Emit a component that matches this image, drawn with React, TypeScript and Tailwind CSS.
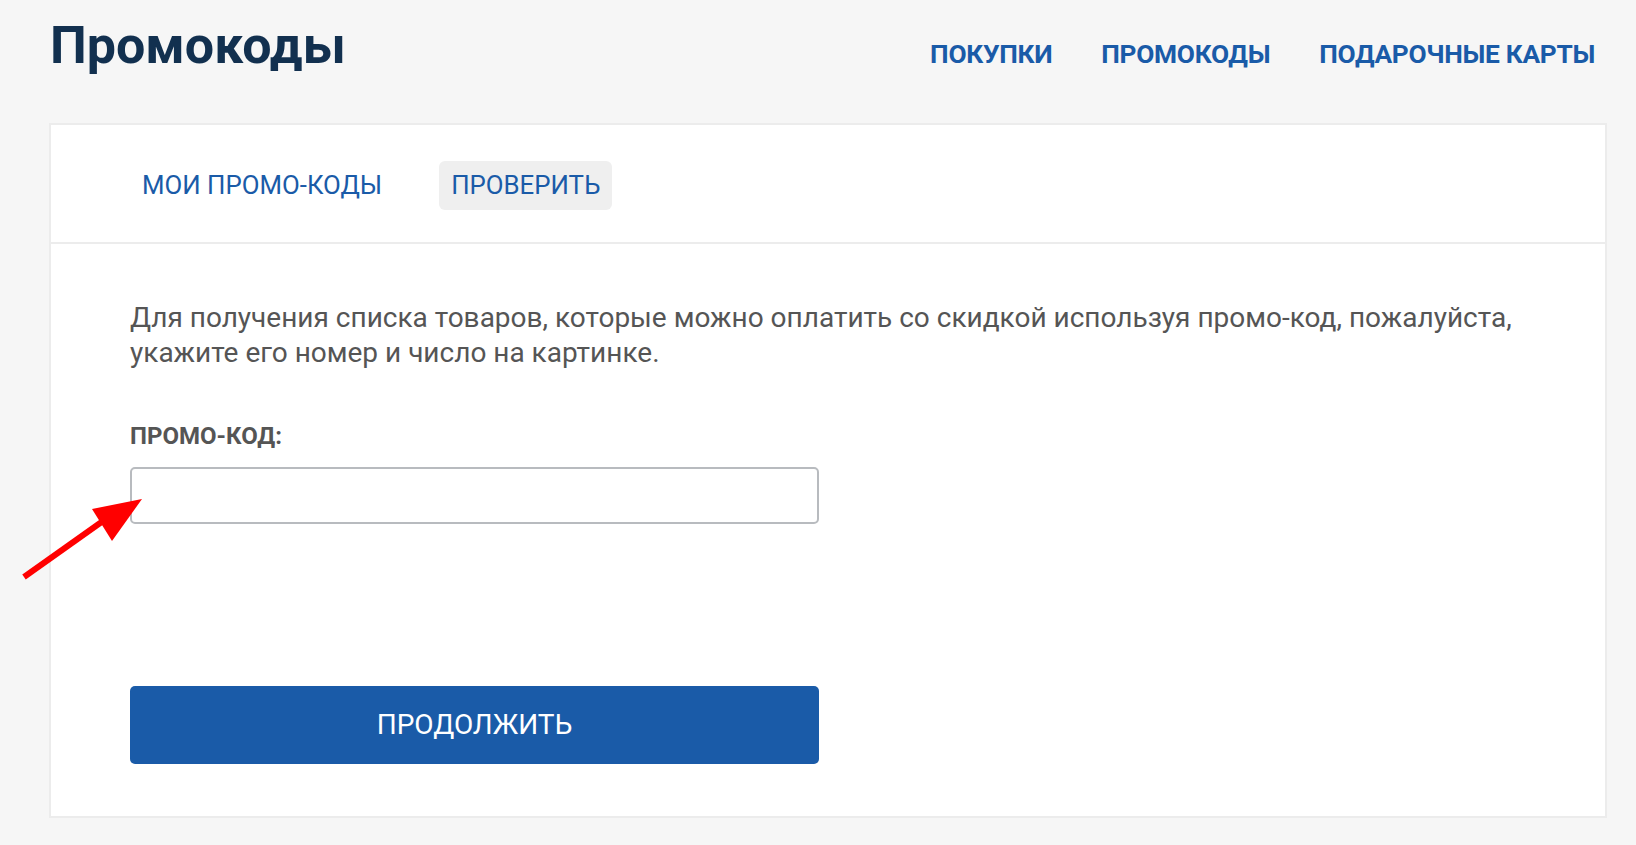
import React from "react";

const font = { fontFamily: "Roboto, 'Noto Sans', sans-serif" };

function PointerArrow() {
  return (
    <svg className="pointer-events-none absolute left-0 top-0" width="200" height="620" viewBox="0 0 200 620">
      <line x1="24" y1="577" x2="110" y2="516" stroke="#ff0000" strokeWidth="6" strokeLinecap="butt" />
      <polygon points="142,499 92,509 112,541" fill="#ff0000" />
    </svg>
  );
}

export default function App() {
  return (
    <div className="relative min-h-[845px] bg-[#f6f6f6]" style={font}>
      <header className="flex h-[123px] items-baseline justify-between pl-[50px] pr-[41px] pt-[14px]">
        <h1 className="text-[52px] font-bold leading-[64px] text-[#12304f]">Промокоды</h1>
        <nav className="flex gap-[49px] text-[26.3px] font-bold uppercase tracking-[-0.3px] text-[#1a5ba8]">
          <a>Покупки</a>
          <a>Промокоды</a>
          <a>Подарочные карты</a>
        </nav>
      </header>

      <main className="ml-[49px] w-[1558px] border-2 border-[#ececec] bg-white">
        <div className="flex h-[119px] items-center gap-[45px] border-b-2 border-[#ececec] pl-[79px] pt-[4px]">
          <button className="h-[49px] rounded-md px-3 text-[25.8px] text-[#1a5ba8]">МОИ ПРОМО-КОДЫ</button>
          <button className="h-[49px] rounded-md bg-[#efefef] px-3 text-[25.8px] text-[#1a5ba8]">ПРОВЕРИТЬ</button>
        </div>

        <div className="pb-[52px] pl-[79px] pt-[56px]">
          <p className="text-[28px] leading-[35px] text-[#555555]">
            Для получения списка товаров, которые можно оплатить со скидкой используя промо-код, пожалуйста,
            <br />
            укажите его номер и число на картинке.
          </p>

          <label className="mt-[52px] block text-[24px] font-bold leading-[28px] text-[#555555]">ПРОМО-КОД:</label>
          <input
            type="text"
            className="mt-[17px] block h-[57px] w-[689px] rounded-[5px] border-2 border-[#b8bbbf] bg-white px-3 text-[24px] outline-none"
          />

          <button className="mt-[162px] block h-[78px] w-[689px] rounded-[5px] bg-[#1a5ba8] text-[28px] text-white">
            ПРОДОЛЖИТЬ
          </button>
        </div>
      </main>

      <PointerArrow />
    </div>
  );
}
